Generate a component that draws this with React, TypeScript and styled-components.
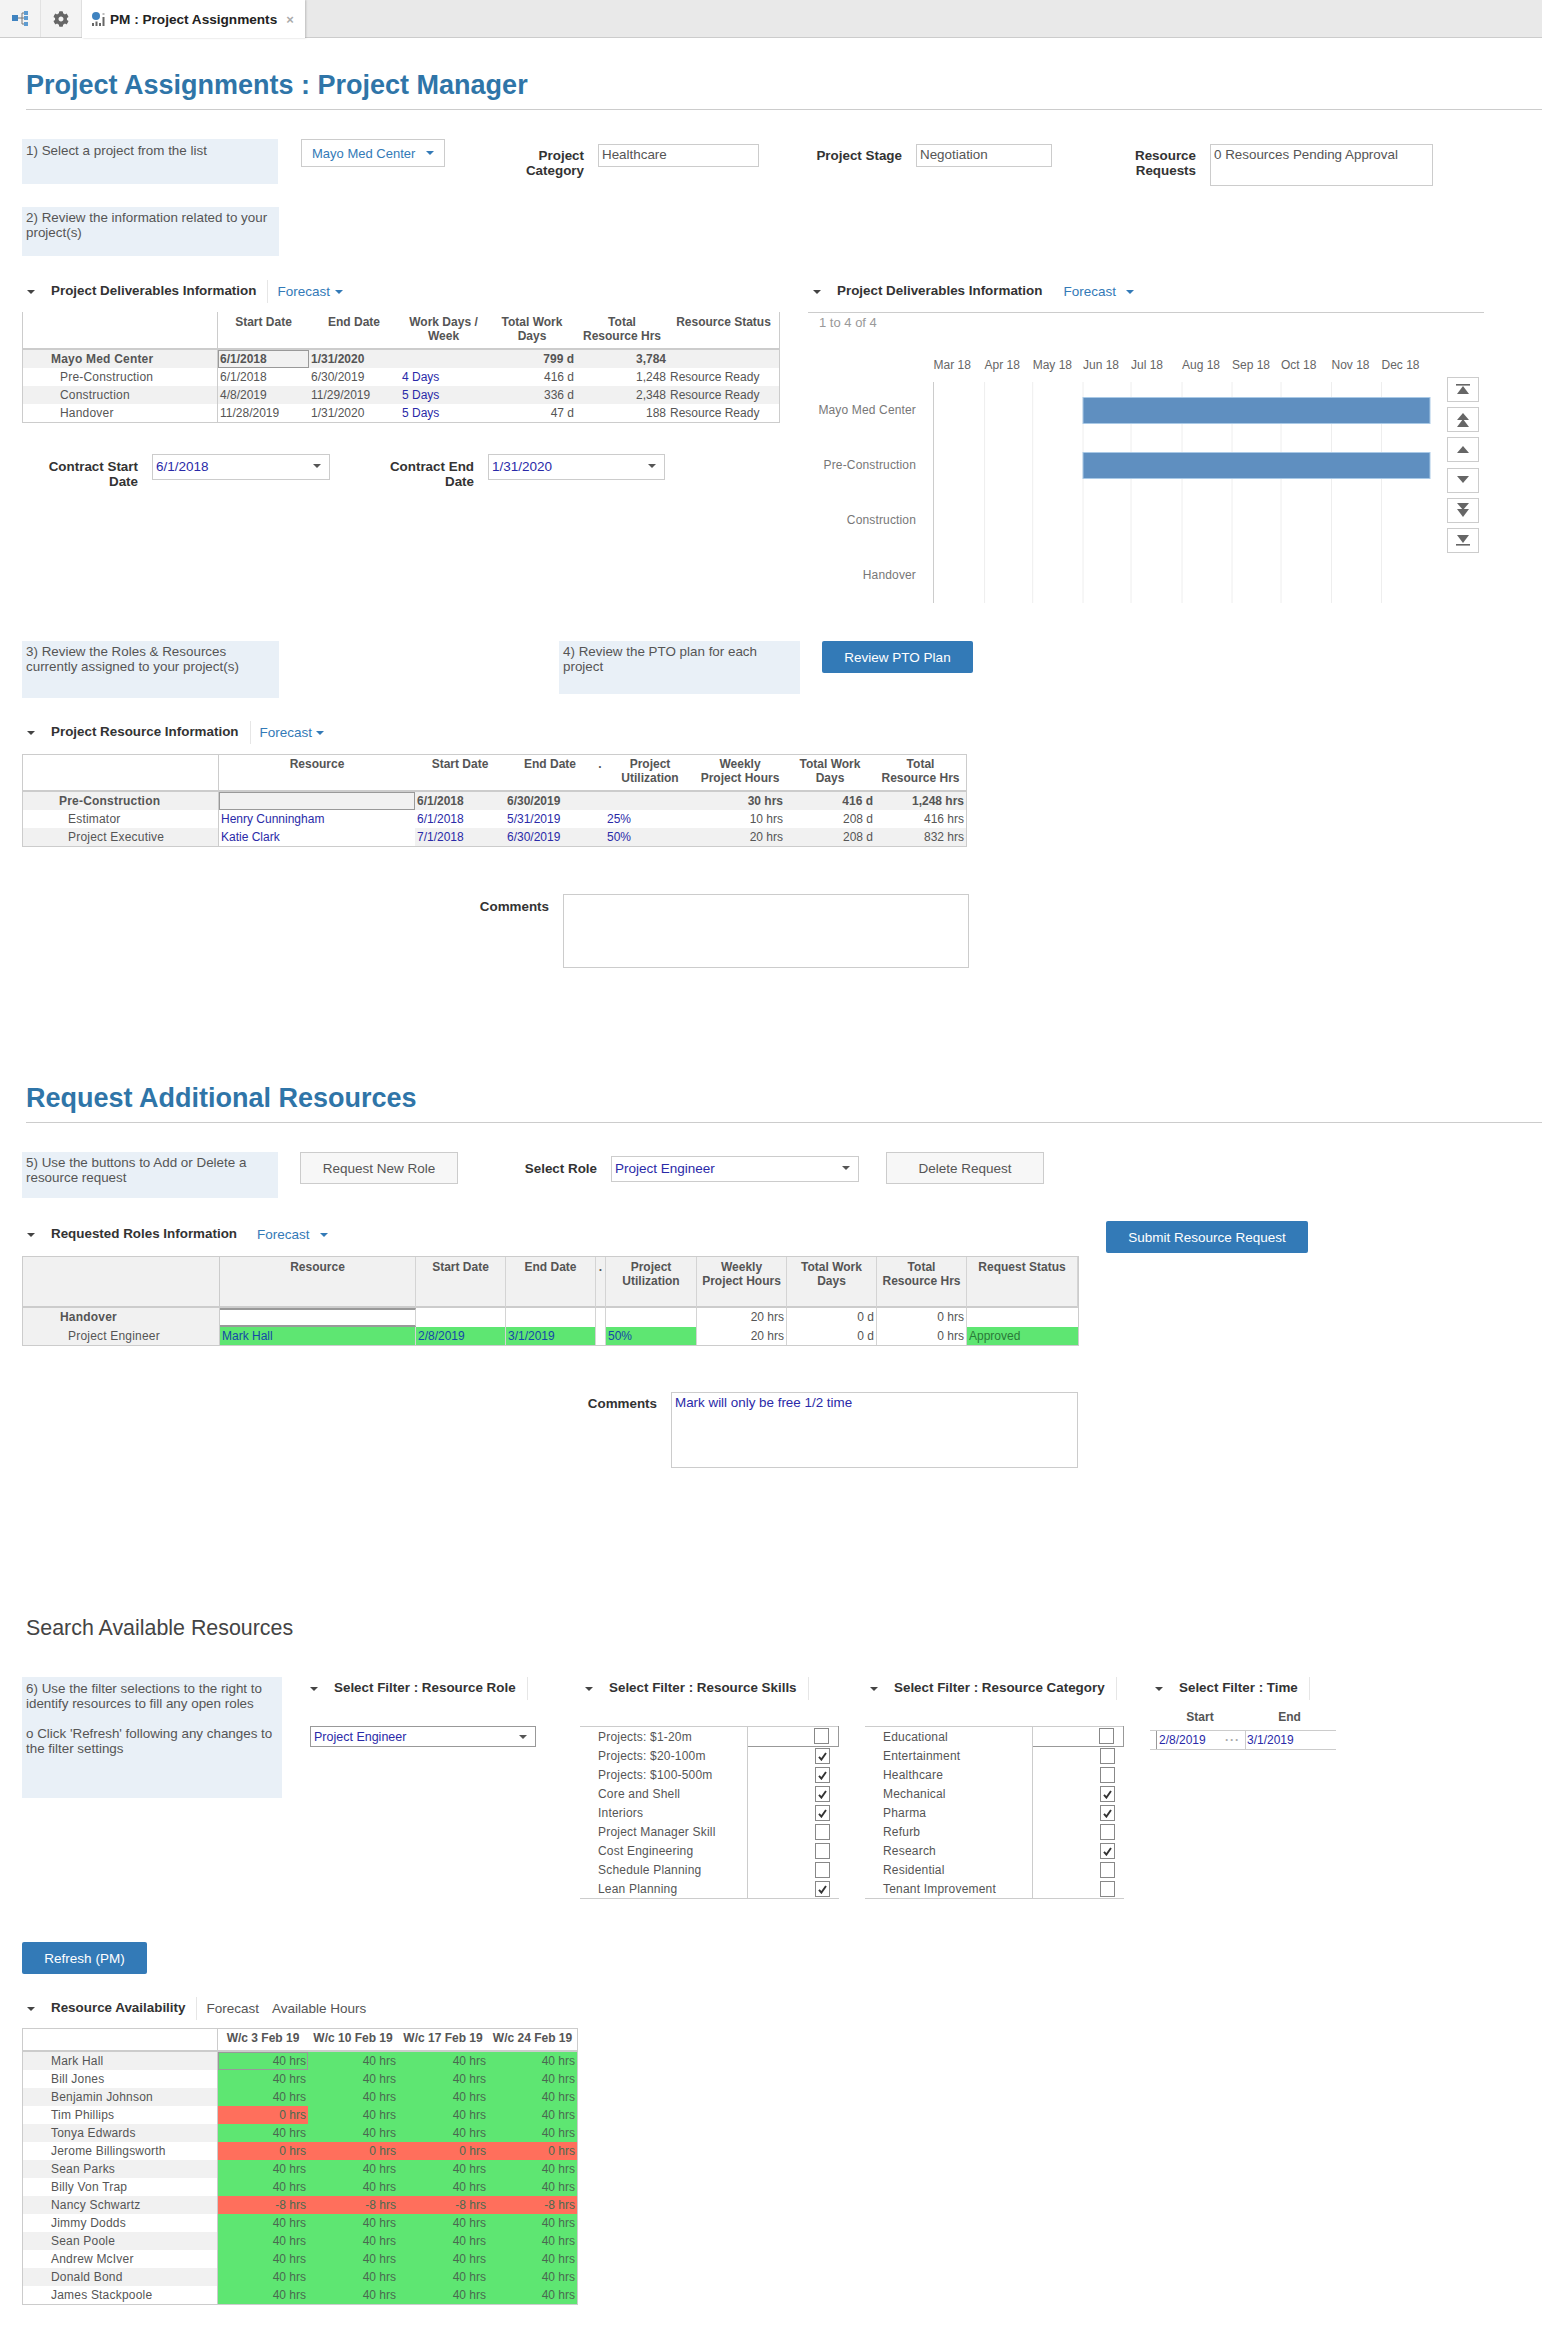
import React from "react";
import styled, { createGlobalStyle } from "styled-components";
import { FaCog } from "react-icons/fa";

const GlobalStyle = createGlobalStyle`
  html, body { margin: 0; padding: 0; background: #fff; }
  body { font-family: "Liberation Sans", Arial, sans-serif; color: #555; }
  * { box-sizing: border-box; }
`;

const LINK = "#2a2aa8";
const BLUE = "#337ab7";
const GREEN = "#5ee672";
const RED = "#ff6f5c";
const GREY = "#f1f1f1";

const Page = styled.div`
  width: 1542px;
  min-height: 2333px;
  overflow: hidden;
`;

const TabBar = styled.div`
  display: flex;
  height: 38px;
  background: #e9e9e9;
  border-bottom: 1px solid #ccc;
`;

const TabIconCell = styled.div`
  width: 41px;
  display: flex;
  align-items: center;
  justify-content: center;
  background: #f3f3f3;
  border-right: 1px solid #e2e2e2;
`;

const Tab = styled.div`
  width: 223px;
  height: 38px;
  padding-left: 9px;
  display: flex;
  align-items: center;
  gap: 5px;
  background: #fff;
  color: #222;
  font-size: 13.6px;
  font-weight: bold;
  white-space: nowrap;
  box-shadow: 1px 0 2px rgba(0, 0, 0, 0.2);
`;

const TabClose = styled.span`
  margin-left: 4px;
  color: #aaa;
  font-size: 13px;
`;

const TitleBar = styled.div<{ $top: number; $bottom: number }>`
  margin-left: 26px;
  padding-top: ${(p) => p.$top}px;
  padding-bottom: ${(p) => p.$bottom}px;
  border-bottom: 1px solid #ccc;
  color: #2f75a8;
  font-size: 27px;
  font-weight: bold;
  line-height: 32px;
`;

const PlainTitle = styled.div`
  margin: 146px 0 0 26px;
  color: #444;
  font-size: 21.4px;
  line-height: 28px;
`;

const TwoColumns = styled.div`
  display: grid;
  grid-template-columns: 786px 1fr;
  margin: 29px 0 0 22px;
`;

const Column = styled.div`
  min-width: 0;
`;

const Block = styled.div`
  margin-left: 22px;
`;

const Row = styled.div<{ $top?: number }>`
  display: flex;
  align-items: flex-start;
  margin-top: ${(p) => p.$top ?? 0}px;
`;

const Hint = styled.div<{ $w: number; $h: number; $top?: number; $left?: number; $pad?: number }>`
  flex: none;
  width: ${(p) => p.$w}px;
  height: ${(p) => p.$h}px;
  margin-top: ${(p) => p.$top ?? 0}px;
  margin-left: ${(p) => p.$left ?? 0}px;
  padding: ${(p) => p.$pad ?? 3}px 0 0 4px;
  background: #e9f0f7;
  color: #555;
  font-size: 13.4px;
  line-height: 15px;
  white-space: pre;
`;

const Caret = styled.span<{ $color?: string; $size?: number }>`
  display: inline-block;
  flex: none;
  width: 0;
  height: 0;
  border-left: ${(p) => p.$size ?? 4}px solid transparent;
  border-right: ${(p) => p.$size ?? 4}px solid transparent;
  border-top: ${(p) => p.$size ?? 4}px solid ${(p) => p.$color ?? "#555"};
`;

const ProjectPicker = styled.div`
  flex: none;
  width: 144px;
  height: 28px;
  margin-left: 23px;
  padding: 0 10px;
  display: flex;
  align-items: center;
  justify-content: space-between;
  border: 1px solid #ccc;
  color: ${BLUE};
  font-size: 13px;
`;

const FieldLabel = styled.div<{ $w: number; $top?: number }>`
  flex: none;
  width: ${(p) => p.$w}px;
  margin-top: ${(p) => p.$top ?? 0}px;
  margin-right: 14px;
  color: #333;
  font-size: 13.4px;
  font-weight: bold;
  line-height: 15px;
  text-align: right;
  white-space: pre;
`;

const ValueBox = styled.div<{ $w: number; $h: number; $top?: number; $link?: boolean }>`
  flex: none;
  width: ${(p) => p.$w}px;
  height: ${(p) => p.$h}px;
  margin-top: ${(p) => p.$top ?? 0}px;
  padding: 2px 3px;
  border: 1px solid #ccc;
  color: ${(p) => (p.$link ? LINK : "#555")};
  font-size: 13.4px;
  line-height: 16px;
`;

const SelectBox = styled.div<{ $w: number; $h: number; $top?: number; $left?: number; $dark?: boolean }>`
  flex: none;
  width: ${(p) => p.$w}px;
  height: ${(p) => p.$h}px;
  margin-top: ${(p) => p.$top ?? 0}px;
  margin-left: ${(p) => p.$left ?? 0}px;
  padding: 0 8px ${(p) => (p.$dark ? 0 : 2)}px 3px;
  display: flex;
  align-items: center;
  justify-content: space-between;
  border: 1px solid ${(p) => (p.$dark ? "#999" : "#ccc")};
  color: ${LINK};
  font-size: ${(p) => (p.$dark ? 12.5 : 13.5)}px;
`;

const SectionBar = styled.div<{ $top?: number; $left?: number; $w?: number }>`
  display: flex;
  align-items: center;
  height: 23px;
  margin-top: ${(p) => p.$top ?? 0}px;
  margin-left: ${(p) => p.$left ?? 0}px;
  width: ${(p) => (p.$w ? `${p.$w}px` : "auto")};
  flex: none;
  padding-left: 5px;
`;

const SectionName = styled.div<{ $sep?: boolean }>`
  height: 23px;
  margin-left: 16px;
  padding-right: 11px;
  border-right: 1px solid ${(p) => (p.$sep === false ? "transparent" : "#e6e6e6")};
  color: #333;
  font-size: 13.4px;
  font-weight: bold;
  line-height: 21px;
  white-space: nowrap;
`;

const ForecastLink = styled.div<{ $left: number; $gap: number; $plain?: boolean }>`
  display: flex;
  align-items: center;
  gap: ${(p) => p.$gap}px;
  margin-left: ${(p) => p.$left}px;
  color: ${(p) => (p.$plain ? "#555" : BLUE)};
  font-size: 13.5px;
  white-space: nowrap;
`;

const DataGrid = styled.div<{ $cols: number[]; $head: number; $first?: number; $w: number; $top: number; $noTop?: boolean }>`
  display: grid;
  width: ${(p) => p.$w}px;
  margin-top: ${(p) => p.$top}px;
  grid-template-columns: ${(p) => p.$cols.map((c) => `${c}px`).join(" ")};
  grid-template-rows: ${(p) => p.$head}px ${(p) => p.$first ?? 18}px;
  grid-auto-rows: 18px;
  border: 1px solid #ccc;
  border-top: ${(p) => (p.$noTop ? "none" : "1px solid #ccc")};
`;

const HeadCell = styled.div<{ $pad: number; $lines?: boolean; $shade?: boolean }>`
  padding-top: ${(p) => p.$pad}px;
  border-bottom: 2px solid #ccc;
  border-right: ${(p) => (p.$lines ? "1px solid #d4d4d4" : "none")};
  background: ${(p) => (p.$shade ? GREY : "transparent")};
  color: #555;
  font-size: 12px;
  font-weight: bold;
  line-height: 14px;
  text-align: center;
  white-space: pre-line;
`;

const HeadBlank = styled(HeadCell)`
  border-right: 1px solid #ccc;
`;

const Cell = styled.div<{
  $bg?: string;
  $align?: string;
  $pad?: number;
  $color?: string;
  $bold?: boolean;
  $sel?: boolean;
  $line?: boolean;
  $thick?: boolean;
}>`
  padding: 0 2px 0 ${(p) => p.$pad ?? 2}px;
  background: ${(p) => p.$bg ?? "transparent"};
  color: ${(p) => p.$color ?? "#555"};
  font-size: 12px;
  font-weight: ${(p) => (p.$bold ? "bold" : "normal")};
  line-height: 18px;
  text-align: ${(p) => p.$align ?? "left"};
  white-space: nowrap;
  overflow: hidden;
  ${(p) => (p.$sel ? "outline: 1px solid #999; outline-offset: -1px;" : "")}
  ${(p) => (p.$line ? "border-right: 1px solid #d4d4d4;" : "")}
  ${(p) => (p.$thick ? "border-top: 2px solid #999; border-bottom: 2px solid #999;" : "")}
`;

const LabelCell = styled(Cell)`
  border-right: 1px solid #ccc;
  padding-left: ${(p) => p.$pad ?? 28}px;
  letter-spacing: 0.2px;
`;

const Pager = styled.div`
  height: 21px;
  width: 676px;
  margin-top: 9px;
  padding-left: 11px;
  border-top: 1px solid #ccc;
  color: #999;
  font-size: 13px;
  line-height: 20px;
`;

const ChartRow = styled.div`
  display: flex;
  align-items: flex-start;
`;

const ChartSvg = styled.svg`
  display: block;
  flex: none;
  font-family: "Liberation Sans", Arial, sans-serif;
  font-size: 12px;
`;

const NavColumn = styled.div`
  display: flex;
  flex-direction: column;
  gap: 5.2px;
  margin-top: 44px;
`;

const NavButton = styled.div`
  width: 32px;
  height: 25px;
  display: flex;
  align-items: center;
  justify-content: center;
  border: 1px solid #ccc;
`;

const PrimaryButton = styled.div<{ $w: number; $left?: number; $top?: number }>`
  flex: none;
  width: ${(p) => p.$w}px;
  height: 32px;
  margin-left: ${(p) => p.$left ?? 0}px;
  margin-top: ${(p) => p.$top ?? 0}px;
  display: flex;
  align-items: center;
  justify-content: center;
  border-radius: 2px;
  background: ${BLUE};
  color: #fff;
  font-size: 13.5px;
`;

const GhostButton = styled.div<{ $left: number }>`
  flex: none;
  width: 158px;
  height: 32px;
  margin-left: ${(p) => p.$left}px;
  display: flex;
  align-items: center;
  justify-content: center;
  border: 1px solid #ccc;
  background: #f7f7f7;
  color: #555;
  font-size: 13.5px;
`;

const FilterColumn = styled.div<{ $left: number; $w: number }>`
  flex: none;
  width: ${(p) => p.$w}px;
  margin-left: ${(p) => p.$left}px;
`;

const CheckList = styled.div`
  width: 259px;
  margin-top: 26px;
  border-top: 1px solid #ccc;
  border-bottom: 1px solid #ccc;
`;

const CheckRow = styled.div`
  display: grid;
  grid-template-columns: 168px 91px;
  height: 19px;
`;

const CheckLabel = styled.div`
  padding: 1px 0 0 18px;
  border-right: 1px solid #ccc;
  color: #555;
  font-size: 12px;
  letter-spacing: 0.2px;
  line-height: 19px;
  white-space: nowrap;
`;

const CheckCell = styled.div<{ $active?: boolean }>`
  display: flex;
  align-items: center;
  justify-content: flex-end;
  padding-right: 9px;
  ${(p) => (p.$active ? "border: 1px solid #999; border-left: none; border-top: none; margin-top: -1px;" : "")}
`;

const CheckBox = styled.div`
  width: 15px;
  height: 16px;
  display: flex;
  align-items: center;
  justify-content: center;
  border: 1px solid #888;
  background: #fff;
`;

const TimeHead = styled.div`
  display: grid;
  grid-template-columns: 90px 89px;
  width: 186px;
  margin-top: 9px;
  padding-left: 5px;
  color: #555;
  font-size: 12px;
  font-weight: bold;
  line-height: 16px;
  text-align: center;
`;

const TimeRow = styled.div`
  display: flex;
  width: 186px;
  height: 20px;
  margin-top: 5px;
  border-top: 1px solid #ccc;
  border-bottom: 1px solid #ccc;
  color: ${LINK};
  font-size: 12px;
  line-height: 18px;
`;

const TimeInput = styled.div`
  display: flex;
  justify-content: space-between;
  width: 90px;
  margin-left: 6px;
  padding: 0 5px 0 2px;
  border-left: 1px solid #999;
  border-right: 1px solid #ccc;
`;

const TimeDots = styled.span`
  color: #aaa;
  font-weight: bold;
  letter-spacing: 1px;
`;

const TimeEnd = styled.span`
  padding-left: 1px;
`;

const Arrow = ({ kind }: { kind: number }) => {
  // kind: 0 top, 1 double up, 2 up, 3 down, 4 double down, 5 bottom
  const shapes: Record<number, React.ReactNode> = {
    0: (
      <>
        <rect x="1" y="1" width="14" height="1.6" />
        <polygon points="8,3 14,11 2,11" />
      </>
    ),
    1: (
      <>
        <polygon points="8,0 14,7 2,7" />
        <polygon points="8,6 14,14 2,14" />
      </>
    ),
    2: <polygon points="8,3 14,10 2,10" />,
    3: <polygon points="8,10 14,3 2,3" />,
    4: (
      <>
        <polygon points="8,7 14,0 2,0" />
        <polygon points="8,14 14,6 2,6" />
      </>
    ),
    5: (
      <>
        <polygon points="8,10 14,2 2,2" />
        <rect x="1" y="11" width="14" height="1.6" />
      </>
    ),
  };
  return (
    <svg width="16" height="14" viewBox="0 0 16 14" fill="#666">
      {shapes[kind]}
    </svg>
  );
};

const Check = () => (
  <svg width="9" height="9" viewBox="0 0 9 9">
    <path d="M1 4.8 L3.4 7.6 L8 1" fill="none" stroke="#333" strokeWidth="1.9" />
  </svg>
);

const TreeIcon = () => (
  <svg width="17" height="15" viewBox="0 0 17 15">
    <rect x="0" y="4" width="6" height="6" fill="#3f83c0" />
    <path d="M6 7 H13 M10 2 V13 M10 2 H13 M10 13 H13" stroke="#777" fill="none" />
    <rect x="12" y="0" width="4" height="4" fill="#5d9bd0" />
    <rect x="12" y="5" width="4" height="4" fill="#5d9bd0" />
    <rect x="12" y="11" width="4" height="4" fill="#5d9bd0" />
  </svg>
);

const ReportIcon = () => (
  <svg width="14" height="15" viewBox="0 0 14 15">
    <circle cx="5" cy="4" r="4" fill="#3f83c0" />
    <rect x="1" y="11" width="2" height="3" fill="#666" />
    <rect x="4.5" y="9.5" width="2" height="4.5" fill="#666" />
    <rect x="8" y="11" width="2" height="3" fill="#666" />
    <rect x="11.5" y="5" width="2" height="9" fill="#666" />
    <rect x="11.5" y="1" width="2" height="2" fill="#bbb" />
  </svg>
);

const Section = ({
  name,
  sep,
  children,
  top,
  left,
  w,
}: {
  name: string;
  sep?: boolean;
  children?: React.ReactNode;
  top?: number;
  left?: number;
  w?: number;
}) => (
  <SectionBar $top={top} $left={left} $w={w}>
    <Caret $color="#444" />
    <SectionName $sep={sep}>{name}</SectionName>
    {children}
  </SectionBar>
);

const months = ["Mar 18", "Apr 18", "May 18", "Jun 18", "Jul 18", "Aug 18", "Sep 18", "Oct 18", "Nov 18", "Dec 18"];
const monthX = [125.5, 176.6, 224.7, 275, 323, 374, 424, 473, 523.5, 573.5];
const ganttRows = ["Mayo Med Center", "Pre-Construction", "Construction", "Handover"];

const Gantt = () => (
  <ChartSvg width="639" height="275" viewBox="0 0 639 275">
    {months.map((m, i) => (
      <g key={m}>
        <line x1={monthX[i]} x2={monthX[i]} y1="49" y2="270" stroke={i === 0 ? "#ccc" : "#eee"} />
        <text x={monthX[i]} y="36" fill="#666">
          {m}
        </text>
      </g>
    ))}
    {ganttRows.map((r, i) => (
      <text key={r} x="108" y={81 + i * 55} fill="#777" textAnchor="end" letterSpacing="0.15">
        {r}
      </text>
    ))}
    <rect x="275" y="64.5" width="347" height="26" fill="#5f8fc0" stroke="#a9c9e6" />
    <rect x="275" y="119.5" width="347" height="26" fill="#5f8fc0" stroke="#a9c9e6" />
  </ChartSvg>
);

const deliverables = [
  ["Pre-Construction", "6/1/2018", "6/30/2019", "4 Days", "416 d", "1,248", "Resource Ready"],
  ["Construction", "4/8/2019", "11/29/2019", "5 Days", "336 d", "2,348", "Resource Ready"],
  ["Handover", "11/28/2019", "1/31/2020", "5 Days", "47 d", "188", "Resource Ready"],
];

const DeliverablesTable = () => (
  <DataGrid $w={758} $top={9} $head={38} $noTop $cols={[195, 91, 90, 89, 88, 92, 111]}>
    <HeadBlank $pad={3} />
    {["Start Date", "End Date", "Work Days /\nWeek", "Total Work\nDays", "Total\nResource Hrs", "Resource Status"].map((h) => (
      <HeadCell key={h} $pad={3}>
        {h}
      </HeadCell>
    ))}
    <LabelCell $bg={GREY} $bold>
      Mayo Med Center
    </LabelCell>
    <Cell $bg={GREY} $sel $bold>
      6/1/2018
    </Cell>
    <Cell $bg={GREY} $bold>
      1/31/2020
    </Cell>
    <Cell $bg={GREY} />
    <Cell $bg={GREY} $align="right" $bold>
      799 d
    </Cell>
    <Cell $bg={GREY} $align="right" $bold>
      3,784
    </Cell>
    <Cell $bg={GREY} />
    {deliverables.map((r, i) => {
      const bg = i === 1 ? GREY : undefined;
      return (
        <React.Fragment key={r[0]}>
          <LabelCell $bg={bg} $pad={37}>
            {r[0]}
          </LabelCell>
          <Cell $bg={bg}>{r[1]}</Cell>
          <Cell $bg={bg}>{r[2]}</Cell>
          <Cell $bg={bg} $color={LINK} $pad={3}>
            {r[3]}
          </Cell>
          <Cell $bg={bg} $align="right">
            {r[4]}
          </Cell>
          <Cell $bg={bg} $align="right">
            {r[5]}
          </Cell>
          <Cell $bg={bg}>{r[6]}</Cell>
        </React.Fragment>
      );
    })}
  </DataGrid>
);

const resourceRows = [
  ["Estimator", "Henry Cunningham", "6/1/2018", "5/31/2019", "25%", "10 hrs", "208 d", "416 hrs"],
  ["Project Executive", "Katie Clark", "7/1/2018", "6/30/2019", "50%", "20 hrs", "208 d", "832 hrs"],
];

const ResourceTable = () => (
  <DataGrid $w={945} $top={10} $head={37} $cols={[196, 196, 90, 90, 10, 90, 90, 90, 91]}>
    <HeadBlank $pad={2} />
    {["Resource", "Start Date", "End Date", ".", "Project\nUtilization", "Weekly\nProject Hours", "Total Work\nDays", "Total\nResource Hrs"].map((h) => (
      <HeadCell key={h} $pad={2}>
        {h}
      </HeadCell>
    ))}
    <LabelCell $bg={GREY} $bold $pad={36}>
      Pre-Construction
    </LabelCell>
    <Cell $bg={GREY} $sel />
    <Cell $bg={GREY} $bold>
      6/1/2018
    </Cell>
    <Cell $bg={GREY} $bold>
      6/30/2019
    </Cell>
    <Cell $bg={GREY} />
    <Cell $bg={GREY} />
    <Cell $bg={GREY} $align="right" $bold>
      30 hrs
    </Cell>
    <Cell $bg={GREY} $align="right" $bold>
      416 d
    </Cell>
    <Cell $bg={GREY} $align="right" $bold>
      1,248 hrs
    </Cell>
    {resourceRows.map((r, i) => {
      const bg = i === 1 ? GREY : undefined;
      return (
        <React.Fragment key={r[0]}>
          <LabelCell $bg={bg} $pad={45}>
            {r[0]}
          </LabelCell>
          <Cell $color={LINK}>{r[1]}</Cell>
          <Cell $bg={bg} $color={LINK}>
            {r[2]}
          </Cell>
          <Cell $bg={bg} $color={LINK}>
            {r[3]}
          </Cell>
          <Cell $bg={bg} />
          <Cell $bg={bg} $color={LINK}>
            {r[4]}
          </Cell>
          <Cell $bg={bg} $align="right">
            {r[5]}
          </Cell>
          <Cell $bg={bg} $align="right">
            {r[6]}
          </Cell>
          <Cell $bg={bg} $align="right">
            {r[7]}
          </Cell>
        </React.Fragment>
      );
    })}
  </DataGrid>
);

const RequestsTable = () => (
  <DataGrid $w={1057} $top={3} $head={51} $first={19} $cols={[197, 196, 90, 90, 10, 91, 90, 90, 90, 111]}>
    <HeadBlank $pad={3} $shade />
    {["Resource", "Start Date", "End Date", ".", "Project\nUtilization", "Weekly\nProject Hours", "Total Work\nDays", "Total\nResource Hrs", "Request Status"].map((h) => (
      <HeadCell key={h} $pad={3} $lines $shade>
        {h}
      </HeadCell>
    ))}
    <LabelCell $bg={GREY} $bold $pad={37}>
      Handover
    </LabelCell>
    <Cell $thick $line />
    <Cell $line />
    <Cell $line />
    <Cell $line />
    <Cell $line />
    <Cell $line $align="right">
      20 hrs
    </Cell>
    <Cell $line $align="right">
      0 d
    </Cell>
    <Cell $line $align="right">
      0 hrs
    </Cell>
    <Cell />
    <LabelCell $bg={GREY} $pad={45}>
      Project Engineer
    </LabelCell>
    <Cell $bg={GREEN} $color="#1448a8" $line>
      Mark Hall
    </Cell>
    <Cell $bg={GREEN} $color="#1448a8" $line>
      2/8/2019
    </Cell>
    <Cell $bg={GREEN} $color="#1448a8" $line>
      3/1/2019
    </Cell>
    <Cell $line />
    <Cell $bg={GREEN} $color="#1448a8" $line>
      50%
    </Cell>
    <Cell $line $align="right">
      20 hrs
    </Cell>
    <Cell $line $align="right">
      0 d
    </Cell>
    <Cell $line $align="right">
      0 hrs
    </Cell>
    <Cell $bg={GREEN} $color="#2a7a38">
      Approved
    </Cell>
  </DataGrid>
);

const skills: [string, boolean][] = [
  ["Projects: $1-20m", false],
  ["Projects: $20-100m", true],
  ["Projects: $100-500m", true],
  ["Core and Shell", true],
  ["Interiors", true],
  ["Project Manager Skill", false],
  ["Cost Engineering", false],
  ["Schedule Planning", false],
  ["Lean Planning", true],
];

const categories: [string, boolean][] = [
  ["Educational", false],
  ["Entertainment", false],
  ["Healthcare", false],
  ["Mechanical", true],
  ["Pharma", true],
  ["Refurb", false],
  ["Research", true],
  ["Residential", false],
  ["Tenant Improvement", false],
];

const Checks = ({ items }: { items: [string, boolean][] }) => (
  <CheckList>
    {items.map(([label, on], i) => (
      <CheckRow key={label}>
        <CheckLabel>{label}</CheckLabel>
        <CheckCell $active={i === 0}>
          <CheckBox>{on && <Check />}</CheckBox>
        </CheckCell>
      </CheckRow>
    ))}
  </CheckList>
);

const people: [string, number[]][] = [
  ["Mark Hall", [40, 40, 40, 40]],
  ["Bill Jones", [40, 40, 40, 40]],
  ["Benjamin Johnson", [40, 40, 40, 40]],
  ["Tim Phillips", [0, 40, 40, 40]],
  ["Tonya Edwards", [40, 40, 40, 40]],
  ["Jerome Billingsworth", [0, 0, 0, 0]],
  ["Sean Parks", [40, 40, 40, 40]],
  ["Billy Von Trap", [40, 40, 40, 40]],
  ["Nancy Schwartz", [-8, -8, -8, -8]],
  ["Jimmy Dodds", [40, 40, 40, 40]],
  ["Sean Poole", [40, 40, 40, 40]],
  ["Andrew McIver", [40, 40, 40, 40]],
  ["Donald Bond", [40, 40, 40, 40]],
  ["James Stackpoole", [40, 40, 40, 40]],
];

const AvailabilityTable = () => (
  <DataGrid $w={556} $top={8} $head={23} $cols={[195, 90, 90, 90, 89]}>
    <HeadBlank $pad={2} />
    {["W/c 3 Feb 19", "W/c 10 Feb 19", "W/c 17 Feb 19", "W/c 24 Feb 19"].map((h) => (
      <HeadCell key={h} $pad={2}>
        {h}
      </HeadCell>
    ))}
    {people.map(([name, hours], i) => (
      <React.Fragment key={name}>
        <LabelCell $bg={i % 2 === 0 ? GREY : undefined}>{name}</LabelCell>
        {hours.map((h, j) => (
          <Cell key={j} $bg={h > 0 ? GREEN : RED} $align="right" $color="#4a6a50" $sel={i === 0 && j === 0}>
            {h} hrs
          </Cell>
        ))}
      </React.Fragment>
    ))}
  </DataGrid>
);

export default function App() {
  return (
    <Page>
      <GlobalStyle />
      <TabBar>
        <TabIconCell>
          <TreeIcon />
        </TabIconCell>
        <TabIconCell>
          <FaCog size={16} color="#666" />
        </TabIconCell>
        <Tab>
          <ReportIcon />
          PM : Project Assignments
          <TabClose>×</TabClose>
        </Tab>
      </TabBar>

      <TitleBar $top={31} $bottom={8}>
        Project Assignments : Project Manager
      </TitleBar>

      <TwoColumns>
        <Column>
          <Row>
            <Hint $w={256} $h={45} $pad={4}>
              1) Select a project from the list
            </Hint>
            <ProjectPicker>
              Mayo Med Center
              <Caret $color={BLUE} />
            </ProjectPicker>
            <FieldLabel $w={139} $top={9}>
              {"Project\nCategory"}
            </FieldLabel>
            <ValueBox $w={161} $h={23} $top={5}>
              Healthcare
            </ValueBox>
          </Row>
          <Hint $w={257} $h={49} $top={23}>
            {"2) Review the information related to your\nproject(s)"}
          </Hint>
          <Section name="Project Deliverables Information" top={24}>
            <ForecastLink $left={9} $gap={5}>
              Forecast
              <Caret $color={BLUE} />
            </ForecastLink>
          </Section>
          <DeliverablesTable />
          <Row $top={31}>
            <FieldLabel $w={116} $top={5}>
              {"Contract Start\nDate"}
            </FieldLabel>
            <SelectBox $w={178} $h={26}>
              6/1/2018
              <Caret />
            </SelectBox>
            <FieldLabel $w={144} $top={5}>
              {"Contract End\nDate"}
            </FieldLabel>
            <SelectBox $w={177} $h={26}>
              1/31/2020
              <Caret />
            </SelectBox>
          </Row>
        </Column>
        <Column>
          <Row $top={5}>
            <FieldLabel $w={94} $top={4}>
              Project Stage
            </FieldLabel>
            <ValueBox $w={136} $h={23}>
              Negotiation
            </ValueBox>
            <FieldLabel $w={144} $top={4}>
              {"Resource\nRequests"}
            </FieldLabel>
            <ValueBox $w={223} $h={42}>
              0 Resources Pending Approval
            </ValueBox>
          </Row>
          <Section name="Project Deliverables Information" sep={false} top={94}>
            <ForecastLink $left={9} $gap={10}>
              Forecast
              <Caret $color={BLUE} />
            </ForecastLink>
          </Section>
          <Pager>1 to 4 of 4</Pager>
          <ChartRow>
            <Gantt />
            <NavColumn>
              {[0, 1, 2, 3, 4, 5].map((k) => (
                <NavButton key={k}>
                  <Arrow kind={k} />
                </NavButton>
              ))}
            </NavColumn>
          </ChartRow>
        </Column>
      </TwoColumns>

      <Block>
        <Row $top={33}>
          <Hint $w={257} $h={57}>
            {"3) Review the Roles & Resources\ncurrently assigned to your project(s)"}
          </Hint>
          <Hint $w={241} $h={53} $left={280}>
            {"4) Review the PTO plan for each\nproject"}
          </Hint>
          <PrimaryButton $w={151} $left={22}>
            Review PTO Plan
          </PrimaryButton>
        </Row>
        <Section name="Project Resource Information" top={23}>
          <ForecastLink $left={9} $gap={4}>
            Forecast
            <Caret $color={BLUE} />
          </ForecastLink>
        </Section>
        <ResourceTable />
        <Row $top={47}>
          <FieldLabel $w={527} $top={5}>
            Comments
          </FieldLabel>
          <ValueBox $w={406} $h={74} />
        </Row>
      </Block>

      <TitleBar $top={114} $bottom={8}>
        Request Additional Resources
      </TitleBar>

      <Block>
        <Row $top={29}>
          <Hint $w={256} $h={46}>
            {"5) Use the buttons to Add or Delete a\nresource request"}
          </Hint>
          <GhostButton $left={22}>Request New Role</GhostButton>
          <FieldLabel $w={139} $top={9}>
            Select Role
          </FieldLabel>
          <SelectBox $w={248} $h={26} $top={4}>
            Project Engineer
            <Caret />
          </SelectBox>
          <GhostButton $left={27}>Delete Request</GhostButton>
        </Row>
        <Row $top={23}>
          <Section name="Requested Roles Information" sep={false} top={2} w={1084}>
            <ForecastLink $left={8} $gap={10}>
              Forecast
              <Caret $color={BLUE} />
            </ForecastLink>
          </Section>
          <PrimaryButton $w={202} $top={0}>
            Submit Resource Request
          </PrimaryButton>
        </Row>
        <RequestsTable />
        <Row $top={46}>
          <FieldLabel $w={635} $top={4}>
            Comments
          </FieldLabel>
          <ValueBox $w={407} $h={76} $link>
            Mark will only be free 1/2 time
          </ValueBox>
        </Row>
      </Block>

      <PlainTitle>Search Available Resources</PlainTitle>

      <Block>
        <Row $top={35}>
          <Hint $w={260} $h={121} $pad={4}>
            {"6) Use the filter selections to the right to\nidentify resources to fill any open roles\n\no Click 'Refresh' following any changes to\nthe filter settings"}
          </Hint>
          <FilterColumn $left={23} $w={275}>
            <Section name="Select Filter : Resource Role" />
            <SelectBox $w={226} $h={21} $top={26} $left={5} $dark>
              Project Engineer
              <Caret />
            </SelectBox>
          </FilterColumn>
          <FilterColumn $left={0} $w={285}>
            <Section name="Select Filter : Resource Skills" />
            <Checks items={skills} />
          </FilterColumn>
          <FilterColumn $left={0} $w={285}>
            <Section name="Select Filter : Resource Category" />
            <Checks items={categories} />
          </FilterColumn>
          <FilterColumn $left={0} $w={190}>
            <Section name="Select Filter : Time" />
            <TimeHead>
              <span>Start</span>
              <span>End</span>
            </TimeHead>
            <TimeRow>
              <TimeInput>
                2/8/2019
                <TimeDots>···</TimeDots>
              </TimeInput>
              <TimeEnd>3/1/2019</TimeEnd>
            </TimeRow>
          </FilterColumn>
        </Row>
        <PrimaryButton $w={125} $top={43}>
          Refresh (PM)
        </PrimaryButton>
        <Section name="Resource Availability" top={23}>
          <ForecastLink $left={9} $gap={13} $plain>
            <span>Forecast</span>
            <span>Available Hours</span>
          </ForecastLink>
        </Section>
        <AvailabilityTable />
      </Block>
    </Page>
  );
}
